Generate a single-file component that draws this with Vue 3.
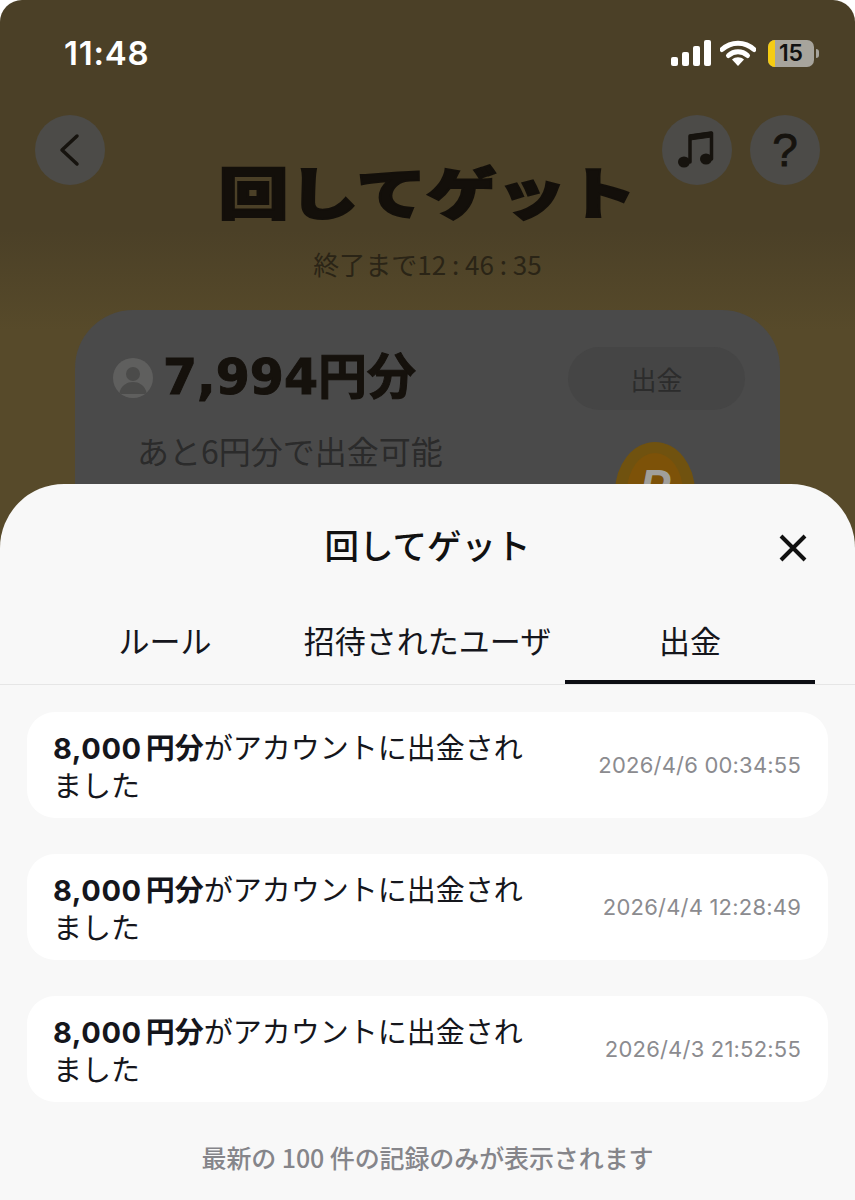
<template>
  <div class="phone">
    <div class="backdrop">
      <div class="status-bar">
        <span class="clock">11:48</span>
        <div class="status-icons">
          <svg class="signal" width="40" height="26" viewBox="0 0 40 26">
            <rect x="0" y="17" width="7" height="9" rx="2" />
            <rect x="11" y="12" width="7" height="14" rx="2" />
            <rect x="22" y="6" width="7" height="20" rx="2" />
            <rect x="33" y="0" width="7" height="26" rx="2" />
          </svg>
          <svg class="wifi" width="36" height="26" viewBox="0 0 36 26">
            <path d="M2 9.5C11 1 25 1 34 9.5" />
            <path d="M8.5 15.5C14 10.5 22 10.5 27.5 15.5" />
            <path class="wifi-dot" d="M18 26l-6-6.5c3.4-3 8.6-3 12 0z" />
          </svg>
          <div class="battery">
            <div class="battery-level"></div>
            <span>15</span>
          </div>
          <div class="battery-cap"></div>
        </div>
      </div>

      <div class="nav-row">
        <button class="round-btn">
          <svg width="26" height="36" viewBox="0 0 26 36">
            <path d="M20 4L5 18l15 14" />
          </svg>
        </button>
        <div class="nav-right">
          <button class="round-btn">
            <svg width="40" height="40" viewBox="0 0 40 40">
              <path d="M13 32V6l21.5-3v26" />
              <path class="note-bar" d="M13 5l21.5-3v5L13 10z" />
              <ellipse cx="7" cy="32" rx="6" ry="5.5" />
              <ellipse cx="29" cy="29" rx="6" ry="5.5" />
            </svg>
          </button>
          <button class="round-btn help">?</button>
        </div>
      </div>

      <h1 class="title">回してゲット</h1>
      <p class="countdown">終了まで12 : 46 : 35</p>

      <div class="balance-card">
        <div class="balance-row">
          <div class="avatar">
            <svg width="40" height="40" viewBox="0 0 40 40">
              <circle cx="20" cy="16" r="7" />
              <path d="M6 36c2-9 8-12 14-12s12 3 14 12z" />
            </svg>
          </div>
          <span class="balance">7,994円分</span>
          <div class="withdraw-btn">出金</div>
        </div>
        <p class="remain">あと6円分で出金可能</p>
        <div class="coin">
          <div class="coin-inner">P</div>
        </div>
      </div>
    </div>

    <section class="sheet">
      <header class="sheet-head">
        <h2>回してゲット</h2>
        <svg class="close" width="30" height="30" viewBox="0 0 30 30">
          <path d="M3 3l24 24M27 3L3 27" />
        </svg>
      </header>

      <nav class="tabs">
        <div
          v-for="tab in tabs"
          :key="tab"
          class="tab"
          :class="{ active: tab === activeTab }"
        >
          {{ tab }}
        </div>
      </nav>

      <ul class="records">
        <li v-for="item in records" :key="item" class="record">
          <p class="record-text">
            <span class="line"><b class="amount">8,000</b><b class="unit">円分</b>がアカウントに出金され</span>
            <span class="line">ました</span>
          </p>
          <time class="record-time">{{ item }}</time>
        </li>
      </ul>

      <p class="note">最新の 100 件の記録のみが表示されます</p>
    </section>
  </div>
</template>

<script setup>
const tabs = ["ルール", "招待されたユーザ", "出金"];
const activeTab = "出金";
const records = ["2026/4/6 00:34:55", "2026/4/4 12:28:49", "2026/4/3 21:52:55"];
</script>

<style>
html,
body {
  background: #fff;
}
</style>

<style scoped>
.phone {
  position: relative;
  width: 855px;
  height: 1200px;
  overflow: hidden;
  font-family: "Noto Sans CJK JP", "Liberation Sans", sans-serif;
  border-radius: 22px 22px 0 0;
}
.backdrop {
  height: 1200px;
  background: linear-gradient(#4b4027 0, #4b4027 230px, #574a2a 330px, #574a2a 500px);
}
.status-bar {
  display: flex;
  justify-content: space-between;
  align-items: center;
  height: 106px;
  padding: 0 36px 0 64px;
  color: #fff;
}
.clock {
  font-family: Inter, sans-serif;
  font-weight: 600;
  font-size: 33px;
  letter-spacing: 0.8px;
}
.status-icons {
  display: flex;
  align-items: center;
}
.signal {
  fill: #fff;
  margin-right: 9px;
}
.wifi {
  margin-right: 12px;
}
.wifi path {
  fill: none;
  stroke: #fff;
  stroke-width: 5;
  stroke-linecap: round;
}
.wifi .wifi-dot {
  fill: #fff;
  stroke: none;
}
.battery {
  position: relative;
  width: 46px;
  height: 27px;
  border-radius: 7px;
  background: #a7a49c;
  overflow: hidden;
  text-align: center;
  color: #111;
  font-family: Inter, sans-serif;
  font-size: 23px;
  font-weight: 600;
  line-height: 27px;
}
.battery-level {
  position: absolute;
  left: 0;
  top: 0;
  bottom: 0;
  width: 7px;
  background: #f5cc12;
}
.battery span {
  position: relative;
}
.battery-cap {
  width: 3px;
  height: 9px;
  margin-left: 2px;
  border-radius: 0 3px 3px 0;
  background: #a7a49c;
}
.nav-row {
  display: flex;
  justify-content: space-between;
  padding: 9px 35px 0;
}
.nav-right {
  display: flex;
  gap: 18px;
}
.round-btn {
  display: flex;
  align-items: center;
  justify-content: center;
  width: 70px;
  height: 70px;
  padding: 0;
  border: 0;
  border-radius: 50%;
  background: #4c4b48;
  color: #16130e;
}
.round-btn svg {
  fill: #16130e;
}
.round-btn path {
  fill: none;
  stroke: #16130e;
  stroke-width: 3.5;
  stroke-linecap: round;
  stroke-linejoin: round;
}
.round-btn .note-bar {
  fill: #16130e;
  stroke-width: 1;
}
.help {
  font-family: "Liberation Sans", sans-serif;
  font-size: 46px;
  font-weight: 400;
  -webkit-text-stroke: 0.8px #16130e;
}
.title {
  margin: -37px 0 0;
  text-align: center;
  font-size: 70px;
  line-height: 84px;
  font-weight: 900;
  color: #130f0a;
  -webkit-text-stroke: 2.5px #130f0a;
  transform: scaleY(0.8);
}
.countdown {
  margin: 16px 0 0;
  text-align: center;
  font-size: 26px;
  line-height: 32px;
  color: #2a2416;
}
.balance-card {
  position: relative;
  height: 300px;
  margin: 30px 75px 0;
  padding: 36px 35px 0 38px;
  box-sizing: border-box;
  border-radius: 58px;
  background: #4a4a4a;
}
.balance-row {
  display: flex;
  align-items: center;
}
.avatar {
  display: flex;
  width: 40px;
  height: 40px;
  margin-right: 10px;
  border-radius: 50%;
  background: #5f5f5e;
  overflow: hidden;
}
.avatar svg {
  fill: #4b4b4a;
}
.balance {
  font-family: "DejaVu Sans", "Noto Sans CJK JP", sans-serif;
  font-size: 49px;
  line-height: 64px;
  font-weight: 700;
  color: #15110c;
  -webkit-text-stroke: 1px #15110c;
}
.withdraw-btn {
  width: 177px;
  height: 63px;
  margin-left: auto;
  border-radius: 32px;
  background: #454545;
  text-align: center;
  font-size: 26px;
  line-height: 63px;
  color: #2c2c2c;
}
.remain {
  margin: 18px 0 0 24px;
  font-size: 32px;
  line-height: 44px;
  color: #2b2b2b;
}
.coin {
  position: absolute;
  left: 540px;
  top: 132px;
  width: 80px;
  height: 100px;
  box-sizing: border-box;
  padding: 11px 12px;
  border-radius: 50%;
  background: #70520f;
}
.coin-inner {
  height: 78px;
  border-radius: 50%;
  background: #7d5208;
  text-align: center;
  color: #a09f9b;
  font-family: "Liberation Sans", sans-serif;
  font-size: 46px;
  font-style: italic;
  font-weight: 700;
  line-height: 66px;
}
.sheet {
  position: absolute;
  left: 0;
  right: 0;
  top: 484px;
  bottom: 0;
  background: #f8f8f8;
  border-radius: 64px 64px 0 0;
}
.sheet-head {
  position: relative;
  height: 121px;
}
.sheet-head h2 {
  margin: 0;
  padding-top: 36px;
  text-align: center;
  font-size: 34.5px;
  line-height: 48px;
  font-weight: 500;
  color: #111;
}
.close {
  position: absolute;
  right: 47px;
  top: 49px;
}
.close path {
  stroke: #111;
  stroke-width: 4;
  fill: none;
}
.tabs {
  display: grid;
  grid-template-columns: repeat(3, 250px);
  justify-content: space-between;
  height: 79px;
  padding: 0 40px;
  border-bottom: 1px solid #e6e6e6;
}
.tab {
  height: 74px;
  text-align: center;
  font-size: 31px;
  line-height: 70px;
  color: #15161c;
  white-space: nowrap;
}
.tab.active {
  height: 79px;
  box-sizing: border-box;
  border-bottom: 4px solid #0d0e14;
}
.records {
  display: flex;
  flex-direction: column;
  gap: 36px;
  margin: 27px 27px 0;
  padding: 0;
  list-style: none;
}
.record {
  display: flex;
  align-items: center;
  justify-content: space-between;
  height: 106px;
  padding: 0 27px 0 26px;
  border-radius: 28px;
  background: #fff;
}
.record-text {
  width: 480px;
  margin: 0;
  font-size: 29px;
  line-height: 38px;
  color: #15161c;
}
.line {
  display: block;
  white-space: nowrap;
}
.amount {
  margin-right: 4px;
  font-family: Inter, sans-serif;
  font-size: 29px;
  line-height: 1;
  letter-spacing: 0.6px;
}
.unit {
  font-weight: 700;
}
.record-time {
  font-family: Inter, sans-serif;
  font-size: 22px;
  letter-spacing: 0.2px;
  color: #8b8b8f;
  white-space: nowrap;
}
.note {
  margin: 37px 0 0;
  text-align: center;
  font-size: 25px;
  line-height: 36px;
  font-weight: 500;
  letter-spacing: -0.1px;
  color: #85858a;
}
</style>
